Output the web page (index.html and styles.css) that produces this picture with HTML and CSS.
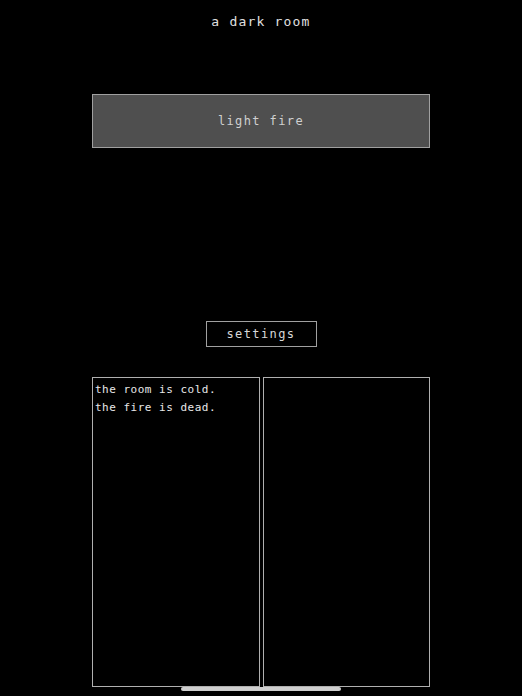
FILE: index.html
```html
<!DOCTYPE html>
<html lang="en">
<head>
    <meta charset="UTF-8">
    <meta name="viewport" content="width=device-width, initial-scale=1.0">
    <title>A Dark Room</title>
    <link rel="stylesheet" href="styles.css">
</head>
<body>
    <main class="game">
        <div class="location">a dark room</div>
        <div class="actions">
            <button class="btn-fire">light fire</button>
        </div>
        <div class="menu">
            <button class="btn-settings">settings</button>
        </div>
        <div class="panels">
            <div class="panel log">
                <div class="log-line">the room is cold.</div>
                <div class="log-line">the fire is dead.</div>
            </div>
            <div class="panel stores"></div>
        </div>
    </main>
    <div class="home-bar"></div>
</body>
</html>
```

FILE: styles.css
```css
html, body {
    margin: 0;
    padding: 0;
    background: #000;
    height: 100%;
    overflow: hidden;
}

body {
    font-family: "DejaVu Sans Mono", "Liberation Mono", monospace;
    color: #d8d8d8;
}

.game {
    width: 338px;
    margin: 0 auto;
}

.location {
    padding-top: 14px;
    height: 18px;
    text-align: center;
    font-size: 13px;
    letter-spacing: 1.2px;
    color: #e0e0e0;
}

.actions {
    padding-top: 62px;
}

.btn-fire {
    display: block;
    width: 100%;
    height: 54px;
    background: #4f4f4f;
    border: 1px solid #a0a0a0;
    color: #d0d0d0;
    font-family: inherit;
    font-size: 12px;
    letter-spacing: 1.4px;
    cursor: pointer;
}

.menu {
    padding-top: 173px;
    display: flex;
    justify-content: center;
}

.btn-settings {
    width: 111px;
    height: 26px;
    background: #000;
    border: 1px solid #a0a0a0;
    color: #d8d8d8;
    font-family: inherit;
    font-size: 12px;
    letter-spacing: 1.4px;
    cursor: pointer;
}

.panels {
    margin-top: 30px;
    display: grid;
    grid-template-columns: 1fr 1fr;
    column-gap: 3px;
    height: 310px;
}

.panel {
    border: 1px solid #b0b0b0;
    padding: 3px 2px;
}

.log-line {
    font-size: 11px;
    line-height: 18px;
    letter-spacing: 0.5px;
    color: #e8e8e8;
    white-space: nowrap;
}

.home-bar {
    position: fixed;
    left: 181px;
    bottom: 5px;
    width: 160px;
    height: 4px;
    border-radius: 2px;
    background: #cfcfcf;
}
```
